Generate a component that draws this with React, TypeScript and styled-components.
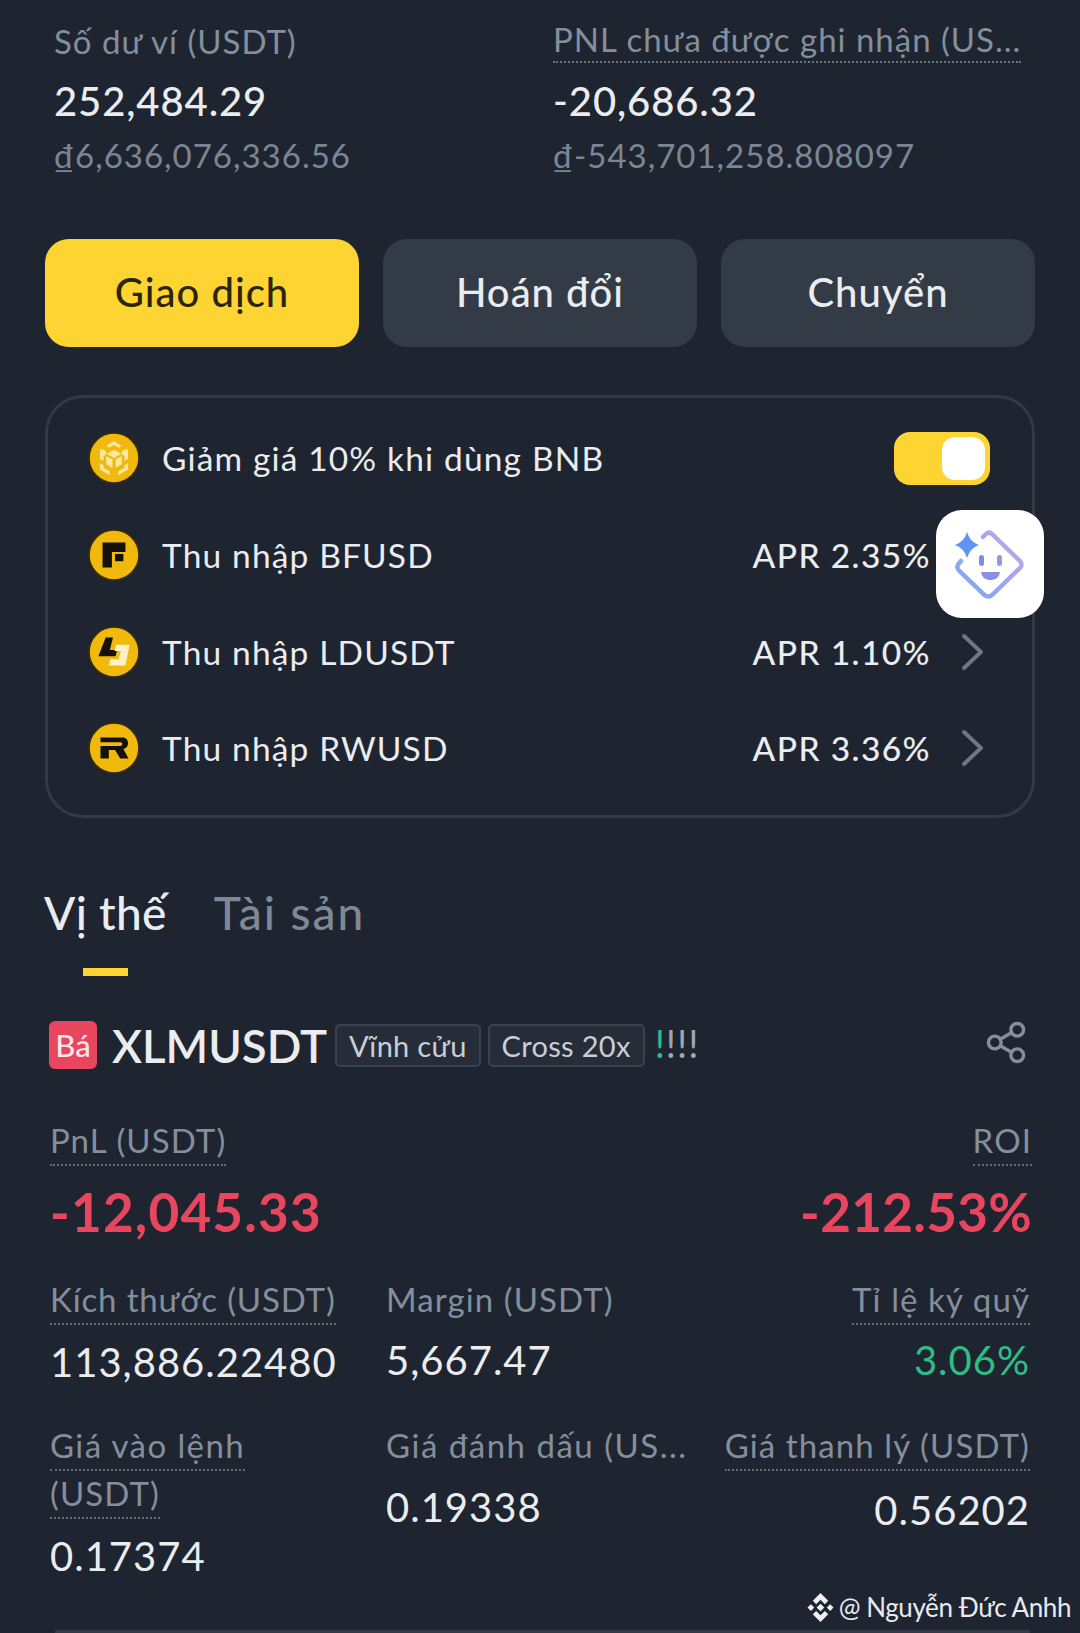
import React from "react";
import styled, { createGlobalStyle } from "styled-components";

const GlobalStyle = createGlobalStyle`
  html, body { margin: 0; padding: 0; background: #1e2530; }
  * { box-sizing: border-box; }
  body { font-family: Lato, "Open Sans", "Noto Sans", sans-serif; }
`;

const Page = styled.div`
  position: relative;
  width: 1080px;
  height: 1633px;
  overflow: hidden;
  background: #1e2530;
  color: #eaecef;
  padding-top: 19px;
`;

const Balances = styled.section`
  display: grid;
  grid-template-columns: 499px 468px;
  padding-left: 54px;
`;

const BalanceCol = styled.div`
  display: flex;
  flex-direction: column;
  align-items: flex-start;
`;

const BalanceLabel = styled.div<{ $dotted?: boolean }>`
  font-size: 33px;
  line-height: 44px;
  letter-spacing: 1px;
  height: ${(p) => (p.$dotted ? "46px" : "44px")};
  margin-top: ${(p) => (p.$dotted ? "-2px" : "0")};
  color: #848e9c;
  white-space: nowrap;
  border-bottom: ${(p) => (p.$dotted ? "2px dotted #6a7280" : "none")};
`;

const BalanceValue = styled.div`
  font-size: 40px;
  line-height: 50px;
  letter-spacing: 0.9px;
  margin-top: 13px;
  font-weight: 500;
  color: #eaecef;
`;

const BalanceSub = styled.div`
  font-size: 33px;
  line-height: 40px;
  letter-spacing: 1px;
  margin-top: 9px;
  color: #7c8594;
`;

const Actions = styled.div`
  display: flex;
  gap: 24px;
  margin: 64px 0 0 45px;
`;

const ActionButton = styled.button<{ $primary?: boolean }>`
  width: 314px;
  height: 108px;
  border: 0;
  border-radius: 24px;
  padding: 0 0 3px;
  font-family: inherit;
  font-size: 40px;
  letter-spacing: 1px;
  font-weight: 500;
  background: ${(p) => (p.$primary ? "#fdd431" : "#333b47")};
  color: ${(p) => (p.$primary ? "#2a2508" : "#eaecef")};
`;

const EarnCard = styled.section`
  width: 990px;
  height: 423px;
  margin: 48px 0 0 45px;
  border: 3px solid #333a46;
  border-radius: 38px;
  padding: 12px 0 0 40px;
`;

const EarnRow = styled.div`
  display: flex;
  align-items: center;
  height: 96.67px;
`;

const CoinIcon = styled.svg`
  width: 52px;
  height: 52px;
  flex: none;
  margin-right: 22px;
`;

const EarnLabel = styled.span`
  font-size: 33.5px;
  letter-spacing: 1.15px;
  color: #eaecef;
  flex: 1;
  white-space: nowrap;
`;

const Apr = styled.span`
  font-size: 33.5px;
  letter-spacing: 1.4px;
  font-weight: 500;
  color: #eaecef;
  white-space: nowrap;
`;

const ChevronIcon = styled.svg`
  width: 24px;
  height: 38px;
  margin: 0 47px 0 30px;
  flex: none;
`;

const ToggleTrack = styled.div`
  width: 96px;
  height: 53px;
  border-radius: 16px;
  background: #fdd431;
  padding: 5px 5px 5px 48px;
  margin-right: 42px;
`;

const ToggleKnob = styled.div`
  width: 43px;
  height: 43px;
  border-radius: 13px;
  background: #ffffff;
`;

const Assistant = styled.div`
  position: absolute;
  left: 936px;
  top: 510px;
  width: 108px;
  height: 108px;
  border-radius: 26px;
  background: #ffffff;
  display: flex;
  align-items: center;
  justify-content: center;
`;

const Tabs = styled.nav`
  display: flex;
  gap: 47px;
  margin: 67px 0 0 44px;
`;

const Tab = styled.div<{ $active?: boolean }>`
  font-size: 46px;
  line-height: 56px;
  font-weight: 500;
  letter-spacing: ${(p) => (p.$active ? "0.3px" : "2px")};
  color: ${(p) => (p.$active ? "#eaecef" : "#7f8895")};
`;

const TabMarker = styled.div`
  width: 45px;
  height: 8px;
  background: #fdd431;
  margin: 27px 0 0 83px;
`;

const SymbolRow = styled.div`
  display: flex;
  align-items: center;
  margin: 44px 53px 0 49px;
  height: 50px;
`;

const SideBadge = styled.span`
  width: 48px;
  height: 48px;
  border-radius: 6px;
  background: #e8455f;
  color: #ffe4e8;
  font-size: 31px;
  font-weight: 500;
  display: flex;
  align-items: center;
  justify-content: center;
  margin-right: 15px;
`;

const SymbolName = styled.span`
  font-size: 45.5px;
  font-weight: 600;
  color: #eaecef;
  margin-right: 8px;
`;

const Tag = styled.span`
  height: 43px;
  padding: 0 12px;
  border: 2px solid #3a424f;
  border-radius: 5px;
  background: #262d39;
  font-size: 29px;
  line-height: 39px;
  letter-spacing: 0.3px;
  color: #c9ced6;
  margin-right: 7px;
  white-space: nowrap;
`;

const Bangs = styled.span`
  font-size: 38px;
  line-height: 44px;
  letter-spacing: 1px;
  margin: -4px 0 0 3px;
  flex: 1;
  color: #a0a6b0;
  & > b { color: #2ebd85; font-weight: 400; }
`;

const ShareSvg = styled.svg`
  width: 41px;
  height: 43px;
  margin-top: -5px;
  fill: none;
  stroke: #848e9c;
  stroke-width: 3.5;
`;

const Pnl = styled.div`
  display: flex;
  justify-content: space-between;
  margin: 46px 48px 0 50px;
`;

const Stat = styled.div<{ $right?: boolean }>`
  display: flex;
  flex-direction: column;
  align-items: ${(p) => (p.$right ? "flex-end" : "flex-start")};
  min-width: 0;
`;

const StatLabel = styled.span<{ $tracking?: number; $plain?: boolean; $wrapped?: boolean }>`
  font-size: 33px;
  line-height: 48px;
  letter-spacing: ${(p) => p.$tracking ?? 1.1}px;
  margin-top: ${(p) => (p.$wrapped ? "-2px" : "0")};
  color: #848e9c;
  border-bottom: 2px dotted ${(p) => (p.$plain ? "transparent" : "#626a77")};
  white-space: nowrap;
`;

const PnlValue = styled.span<{ $tight?: boolean }>`
  font-size: 53px;
  line-height: 60px;
  letter-spacing: ${(p) => (p.$tight ? "0.3px" : "1.2px")};
  font-weight: 700;
  color: #e8455f;
  margin-top: 16px;
`;

const StatGrid = styled.div<{ $top: number }>`
  display: grid;
  grid-template-columns: 336px 338px 306px;
  margin: ${(p) => p.$top}px 0 0 50px;
`;

const StatValue = styled.span<{ $green?: boolean; $gap?: number }>`
  font-size: 40px;
  line-height: 50px;
  letter-spacing: 1px;
  margin-top: ${(p) => p.$gap ?? 12}px;
  color: ${(p) => (p.$green ? "#2ebd85" : "#eaecef")};
`;

const Watermark = styled.div`
  position: absolute;
  right: 9px;
  bottom: 9px;
  display: flex;
  align-items: center;
  gap: 5px;
  font-size: 26px;
  line-height: 34px;
  letter-spacing: -0.4px;
  color: #e8eaee;
`;

const BottomRule = styled.div`
  position: absolute;
  left: 55px;
  right: 50px;
  bottom: 0;
  height: 3px;
  background: #333a46;
`;

const Coin = () => <circle cx="25" cy="25" r="24" fill="#f0b90b" stroke="#3a2d08" strokeWidth="1.500" />;

const BnbIcon = () => (
  <CoinIcon viewBox="0 0 50 50">
    <Coin />
    <g fill="#fbe7a0">
      <path d="M25 9l7.500 4.300-3 1.800L25 12.500l-4.500 2.600-3-1.800z" />
      <path d="M13 16l4.500 2.600v3l-2.500 1.400v5l-3.500-2V17.500z" />
      <path d="M37 16l-4.500 2.600v3l2.500 1.400v5l3.500-2V17.500z" />
      <path d="M25 17l7 4-7 4-7-4z" />
      <path d="M17.500 23l6 3.500v8l-6-3.500z" />
      <path d="M32.500 23l-6 3.500v8l6-3.500z" />
      <path d="M11.500 30l3.500 2v2.500l6 3.500v3.500l-9.500-5.500z" />
      <path d="M38.500 30l-3.500 2v2.500l-6 3.500v3.500l9.500-5.500z" />
    </g>
  </CoinIcon>
);

const BfusdIcon = () => (
  <CoinIcon viewBox="0 0 50 50">
    <Coin />
    <path d="M14 13h22v9H23v15h-9z" fill="#14110a" />
    <path d="M26 24h8v7h-8z" fill="#14110a" />
  </CoinIcon>
);

const LdIcon = () => (
  <CoinIcon viewBox="0 0 50 50">
    <Coin />
    <path d="M17 11h7l-3 12h7l-1.500 6H10z" fill="#14110a" />
    <path d="M27 18h13l-4 20H20l1.500-6h8l2-8h-6z" fill="#fdf2c4" />
  </CoinIcon>
);

const RwIcon = () => (
  <CoinIcon viewBox="0 0 50 50">
    <Coin />
    <path
      d="M12 15h21c3.500 0 5.500 2.300 5.500 5.500s-2 5-4.500 5.500L39 35h-8l-5-8h-6v8h-8V23h19c1.300 0 2-.7 2-1.800s-.7-1.700-2-1.700H12z"
      fill="#14110a"
    />
  </CoinIcon>
);

const Chevron = () => (
  <ChevronIcon viewBox="0 0 24 38">
    <path d="M3 3l17 16L3 35" fill="none" stroke="#6f7785" strokeWidth="4" strokeLinecap="round" strokeLinejoin="round" />
  </ChevronIcon>
);

const AssistantFace = () => (
  <svg width="72" height="72" viewBox="0 0 72 72">
    <defs>
      <linearGradient id="ring" x1="0" y1="1" x2="1" y2="0">
        <stop offset="0" stopColor="#7aa8f0" />
        <stop offset="1" stopColor="#c3a6e6" />
      </linearGradient>
    </defs>
    <path
      d="M7 33l-2.500 3c-1.500 2-1.500 4 0 6l26 25c2.500 2 5 2 7.500 0l28-27c2-2 2-5 0-7L38 6c-2-2-4-2-6 0l-3 3"
      fill="none"
      stroke="url(#ring)"
      strokeWidth="4.500"
      strokeLinecap="round"
    />
    <path d="M13 4Q16 14 25 17 16 20 13 30 10 20 1 17 10 14 13 4z" fill="#5f95f5" />
    <rect x="25" y="27" width="5" height="11" rx="2.500" fill="#7c8fe0" />
    <rect x="43" y="27" width="5" height="11" rx="2.500" fill="#9a93e0" />
    <path d="M27 44h19c-1 6-5 8-9.500 8S28 50 27 44z" fill="#8b8fe4" />
  </svg>
);

const ShareIcon = () => (
  <ShareSvg viewBox="0 0 42 44">
    <circle cx="32" cy="9" r="6.500" />
    <circle cx="9" cy="22" r="6.500" />
    <circle cx="32" cy="35" r="6.500" />
    <path d="M15 18.500l11-6.500M15 25.500l11 6.500" />
  </ShareSvg>
);

const BinanceMark = () => (
  <svg width="27" height="31" viewBox="0 0 28 32" fill="#eef0f3">
    <path d="M14 1l8 8-3.500 3.500L14 8l-4.500 4.500L6 9z" />
    <path d="M14 31l-8-8 3.500-3.500L14 24l4.500-4.500L22 23z" />
    <path d="M4 12.500L7.500 16 4 19.500.5 16z" />
    <path d="M24 12.500l3.500 3.500-3.500 3.500-3.500-3.500z" />
    <path d="M14 12l4 4-4 4-4-4z" />
  </svg>
);

const App = () => (
  <Page>
    <GlobalStyle />
    <Balances>
      <BalanceCol>
        <BalanceLabel>Số dư ví (USDT)</BalanceLabel>
        <BalanceValue>252,484.29</BalanceValue>
        <BalanceSub>₫6,636,076,336.56</BalanceSub>
      </BalanceCol>
      <BalanceCol>
        <BalanceLabel $dotted>PNL chưa được ghi nhận (US...</BalanceLabel>
        <BalanceValue>-20,686.32</BalanceValue>
        <BalanceSub>₫-543,701,258.808097</BalanceSub>
      </BalanceCol>
    </Balances>

    <Actions>
      <ActionButton $primary>Giao dịch</ActionButton>
      <ActionButton>Hoán đổi</ActionButton>
      <ActionButton>Chuyển</ActionButton>
    </Actions>

    <EarnCard>
      <EarnRow>
        <BnbIcon />
        <EarnLabel>Giảm giá 10% khi dùng BNB</EarnLabel>
        <ToggleTrack>
          <ToggleKnob />
        </ToggleTrack>
      </EarnRow>
      <EarnRow>
        <BfusdIcon />
        <EarnLabel>Thu nhập BFUSD</EarnLabel>
        <Apr>APR 2.35%</Apr>
        <Chevron />
      </EarnRow>
      <EarnRow>
        <LdIcon />
        <EarnLabel>Thu nhập LDUSDT</EarnLabel>
        <Apr>APR 1.10%</Apr>
        <Chevron />
      </EarnRow>
      <EarnRow>
        <RwIcon />
        <EarnLabel>Thu nhập RWUSD</EarnLabel>
        <Apr>APR 3.36%</Apr>
        <Chevron />
      </EarnRow>
    </EarnCard>

    <Assistant>
      <AssistantFace />
    </Assistant>

    <Tabs>
      <Tab $active>Vị thế</Tab>
      <Tab>Tài sản</Tab>
    </Tabs>
    <TabMarker />

    <SymbolRow>
      <SideBadge>Bá</SideBadge>
      <SymbolName>XLMUSDT</SymbolName>
      <Tag>Vĩnh cửu</Tag>
      <Tag>Cross 20x</Tag>
      <Bangs>
        <b>!</b>!!!
      </Bangs>
      <ShareIcon />
    </SymbolRow>

    <Pnl>
      <Stat>
        <StatLabel>PnL (USDT)</StatLabel>
        <PnlValue>-12,045.33</PnlValue>
      </Stat>
      <Stat $right>
        <StatLabel>ROI</StatLabel>
        <PnlValue $tight>-212.53%</PnlValue>
      </Stat>
    </Pnl>

    <StatGrid $top={33}>
      <Stat>
        <StatLabel $tracking={0.85}>Kích thước (USDT)</StatLabel>
        <StatValue>113,886.22480</StatValue>
      </Stat>
      <Stat>
        <StatLabel $plain>Margin (USDT)</StatLabel>
        <StatValue $gap={10}>5,667.47</StatValue>
      </Stat>
      <Stat $right>
        <StatLabel>Tỉ lệ ký quỹ</StatLabel>
        <StatValue $green $gap={10}>3.06%</StatValue>
      </Stat>
    </StatGrid>

    <StatGrid $top={34}>
      <Stat>
        <StatLabel $tracking={1.4}>Giá vào lệnh</StatLabel>
        <StatLabel $wrapped>(USDT)</StatLabel>
        <StatValue>0.17374</StatValue>
      </Stat>
      <Stat>
        <StatLabel $plain $tracking={1.5}>Giá đánh dấu (US...</StatLabel>
        <StatValue $gap={11}>0.19338</StatValue>
      </Stat>
      <Stat $right>
        <StatLabel>Giá thanh lý (USDT)</StatLabel>
        <StatValue $gap={14}>0.56202</StatValue>
      </Stat>
    </StatGrid>

    <Watermark>
      <BinanceMark />
      <span>@ Nguyễn Đức Anhh</span>
    </Watermark>
    <BottomRule />
  </Page>
);

export default App;
